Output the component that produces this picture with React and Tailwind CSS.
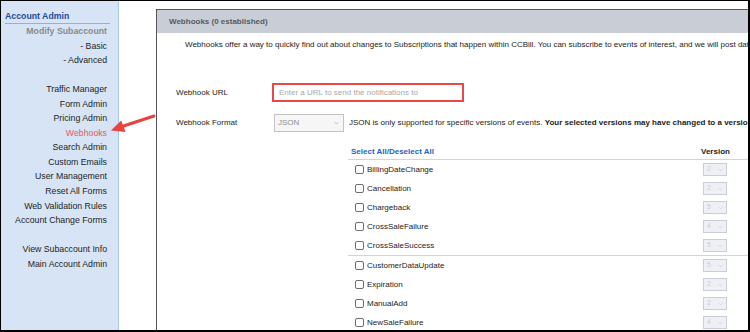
import React from "react";

// ─── Sidebar links ────────────────────────────────────────────────────────────
const NAV = [
  { label: "Modify Subaccount", tone: "muted" },
  { label: "- Basic" },
  { label: "- Advanced" },
  null,
  { label: "Traffic Manager" },
  { label: "Form Admin" },
  { label: "Pricing Admin" },
  { label: "Webhooks", tone: "active" },
  { label: "Search Admin" },
  { label: "Custom Emails" },
  { label: "User Management" },
  { label: "Reset All Forms" },
  { label: "Web Validation Rules" },
  { label: "Account Change Forms" },
  null,
  { label: "View Subaccount Info" },
  { label: "Main Account Admin" },
];

const EVENTS = [
  { name: "BillingDateChange", version: 2 },
  { name: "Cancellation", version: 2 },
  { name: "Chargeback", version: 5 },
  { name: "CrossSaleFailure", version: 4 },
  { name: "CrossSaleSuccess", version: 5, divider: true },
  { name: "CustomerDataUpdate", version: 5 },
  { name: "Expiration", version: 2 },
  { name: "ManualAdd", version: 2 },
  { name: "NewSaleFailure", version: 4 },
];

function Chevron({ className }) {
  return (
    <svg viewBox="0 0 8 5" className={className} fill="none">
      <path d="M1 1l3 3 3-3" stroke="currentColor" strokeWidth="1" />
    </svg>
  );
}

function Sidebar() {
  return (
    <div className="w-[118px] shrink-0 h-full bg-[#d6e4f6] border-r border-[#a9c7ee] pt-[9px] pl-[4px] pr-[8px] text-[8.75px]">
      <div className="leading-[13px] font-bold text-[#1d4c9c] border-b border-[#a7adb8]">
        Account Admin
      </div>
      <div className="pr-[3px] text-right leading-[14.55px]">
        {NAV.map((item, i) =>
          item ? (
            <div
              key={i}
              className={
                item.tone === "muted"
                  ? "font-bold text-[#8a8a8a]"
                  : item.tone === "active"
                    ? "text-[#ec5460]"
                    : "text-[#1e1e1e]"
              }
            >
              {item.label}
            </div>
          ) : (
            <div key={i} className="h-[14.55px]" />
          ),
        )}
      </div>
    </div>
  );
}

function VersionSelect({ value }) {
  return (
    <div className="w-[24px] h-[13px] border border-[#c9cdd9] bg-[#eef0f4] flex items-center justify-between px-[3px] text-[7px] text-[#c9ccd4]">
      <span>{value}</span>
      <Chevron className="w-[5px] h-[4px] text-[#c2c6d0]" />
    </div>
  );
}

function Panel() {
  return (
    <div className="flex-1 mt-[8px] border-l border-t border-[#555] bg-white text-[8px] text-[#222] overflow-hidden">
      {/* ── Header ── */}
      <div className="h-[23px] bg-[#c9cdd6] flex items-center pl-[12px] font-bold text-[#555a62] whitespace-nowrap">
        Webhooks (0 established)
      </div>

      {/* ── Description ── */}
      <p className="mt-[6px] pl-[28px] leading-[12px] whitespace-nowrap">
        Webhooks offer a way to quickly find out about changes to Subscriptions that
        happen within CCBill. You can subscribe to events of interest, and we will post
        data to your URL when they occur.
      </p>

      {/* ── URL ── */}
      <div className="mt-[32px] pl-[19px] flex items-center">
        <span className="w-[96px] shrink-0">Webhook URL</span>
        <div className="w-[192px] h-[19px] border-2 border-[#e9474a] bg-white flex items-center pl-[5px] text-[#a9a9a9]">
          Enter a URL to send the notifications to
        </div>
      </div>

      {/* ── Format ── */}
      <div className="mt-[12px] pl-[19px] flex items-center whitespace-nowrap">
        <span className="w-[96px] shrink-0">Webhook Format</span>
        <div className="ml-[2px] w-[70px] h-[18px] border border-[#c3c3c3] bg-[#f6f6f6] flex items-center justify-between pl-[3px] pr-[4px] text-[#8d8d8d] shrink-0">
          <span>JSON</span>
          <Chevron className="w-[5px] h-[4px] text-[#999]" />
        </div>
        <span className="ml-[5px]">
          JSON is only supported for specific versions of events.{" "}
          <b>Your selected versions may have changed to a version that supports JSON.</b>
        </span>
      </div>

      {/* ── Event table ── */}
      <div className="mt-[12px] ml-[191px] w-[440px]">
        <div className="h-[16px] flex items-center border-b border-[#d4d4d4]">
          <span className="w-[353px] pl-[3px] font-bold text-[#1f5fc4]">
            Select All/Deselect All
          </span>
          <span className="font-bold">Version</span>
        </div>
        {EVENTS.map((ev) => (
          <div
            key={ev.name}
            className={`h-[19px] flex items-center ${ev.divider ? "h-[20px] border-b border-[#d4d4d4]" : ""}`}
          >
            <div className="w-[355px] flex items-center pl-[7px] gap-[3px]">
              <span className="w-[9px] h-[9px] rounded-[2px] border border-[#6d6d6d] bg-white" />
              <span>{ev.name}</span>
            </div>
            <VersionSelect value={ev.version} />
          </div>
        ))}
      </div>
    </div>
  );
}

export default function App() {
  return (
    <div
      className="relative w-[750px] h-[332px] bg-white border-t border-l border-r-2 border-b-2 border-black overflow-hidden flex"
      style={{ fontFamily: '"Liberation Sans", Arial, sans-serif' }}
    >
      <Sidebar />
      <div className="flex-1 flex pl-[37px] min-w-0">
        <Panel />
      </div>

      {/* annotation arrow */}
      <svg
        className="absolute left-[105px] top-[108px] w-[55px] h-[30px]"
        viewBox="105 108 55 30"
      >
        <line x1="153" y1="115" x2="121" y2="125.5" stroke="#e8443f" strokeWidth="3" strokeLinecap="round" />
        <polygon points="110,129.5 120.2,119.4 124.6,131" fill="#e8443f" />
      </svg>
    </div>
  );
}
